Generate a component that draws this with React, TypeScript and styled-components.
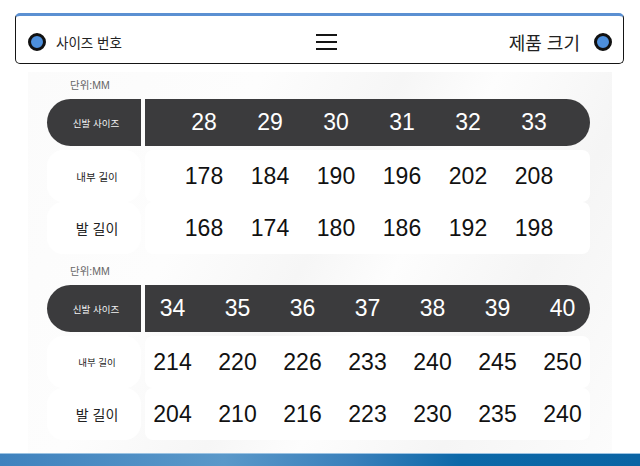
import React from 'react';
import styled, {createGlobalStyle} from 'styled-components';

type SizeTable = {
    sizes: number[]
    inner: number[]
    foot: number[]
    colWidth: number
    shift: number
    innerLabelSize: number
}

const tables: SizeTable[] = [
    {
        sizes: [28, 29, 30, 31, 32, 33],
        inner: [178, 184, 190, 196, 202, 208],
        foot: [168, 174, 180, 186, 192, 198],
        colWidth: 66,
        shift: 26,
        innerLabelSize: 10.5,
    },
    {
        sizes: [34, 35, 36, 37, 38, 39, 40],
        inner: [214, 220, 226, 233, 240, 245, 250],
        foot: [204, 210, 216, 223, 230, 235, 240],
        colWidth: 65,
        shift: -5,
        innerLabelSize: 9.5,
    },
];

const GlobalStyle = createGlobalStyle`
  html, body {
    margin: 0;
    padding: 0;
    background: #ffffff;
  }
  body {
    font-family: "Liberation Sans", "Noto Sans CJK KR", sans-serif;
  }
`

function App() {
    return (
        <Page>
            <GlobalStyle/>
            <Header>
                <Side>
                    <Dot/>
                    <LeftTitle>사이즈 번호</LeftTitle>
                </Side>
                <Burger>
                    <span/><span/><span/>
                </Burger>
                <Side>
                    <RightTitle>제품 크기</RightTitle>
                    <Dot/>
                </Side>
            </Header>
            <Panel>
                {tables.map((t, i) => (
                    <Section key={i} $first={i === 0}>
                        <Unit>단위:MM</Unit>
                        <PillRow>
                            <PillLabel>신발 사이즈</PillLabel>
                            <PillValues>
                                <ValueGrid $cols={t.sizes.length} $w={t.colWidth} $shift={t.shift}>
                                    {t.sizes.map(s => <HeadNum key={s}>{s}</HeadNum>)}
                                </ValueGrid>
                            </PillValues>
                        </PillRow>
                        <DataRow>
                            <LabelCell $size={t.innerLabelSize}>내부 길이</LabelCell>
                            <ValueCell>
                                <ValueGrid $cols={t.inner.length} $w={t.colWidth} $shift={t.shift}>
                                    {t.inner.map((v, k) => <Num key={k}>{v}</Num>)}
                                </ValueGrid>
                            </ValueCell>
                        </DataRow>
                        <DataRow>
                            <LabelCell $size={14}>발 길이</LabelCell>
                            <ValueCell>
                                <ValueGrid $cols={t.foot.length} $w={t.colWidth} $shift={t.shift}>
                                    {t.foot.map((v, k) => <Num key={k}>{v}</Num>)}
                                </ValueGrid>
                            </ValueCell>
                        </DataRow>
                    </Section>
                ))}
            </Panel>
            <Footer/>
        </Page>
    );
}

export default App;

const Page = styled.div`
  width: 640px;
  height: 466px;
  display: flex;
  flex-direction: column;
  overflow: hidden;
  background: #ffffff;
`

const Header = styled.div`
  box-sizing: border-box;
  margin: 13px 16px 0 15px;
  height: 51px;
  border: 1.5px solid #151515;
  border-top: 3px solid #5b90d2;
  border-radius: 5px;
  padding: 5px 11px 0 12px;
  display: flex;
  align-items: center;
  justify-content: space-between;
  background: #ffffff;
`

const Side = styled.div`
  display: flex;
  align-items: center;
  gap: 10px;
  width: 140px;
  &:last-child {
    justify-content: flex-end;
    gap: 14px;
  }
`

const Dot = styled.div`
  box-sizing: border-box;
  width: 18px;
  height: 18px;
  border-radius: 50%;
  border: 3px solid #111;
  background: #4d8fdc;
`

const LeftTitle = styled.span`
  font-size: 13.5px;
  color: #222;
`

const RightTitle = styled.span`
  font-size: 18px;
  color: #222;
`

const Burger = styled.div`
  display: flex;
  flex-direction: column;
  gap: 4.7px;
  width: 21px;
  margin-left: 12px;
  span {
    display: block;
    height: 2px;
    background: #151515;
  }
`

const Panel = styled.div`
  flex: 1;
  margin: 8px 28px 0;
  padding: 5px 0 0 19px;
  background: linear-gradient(118deg, #fbfbfb 0%, #fdfdfd 30%, #f6f6f6 48%, #fdfdfd 60%, #f5f5f5 78%, #fcfcfc 100%);
`

const Section = styled.div<{ $first: boolean }>`
  display: flex;
  flex-direction: column;
  margin-top: ${p => p.$first ? 0 : 9}px;
`

const Unit = styled.div`
  height: 16px;
  line-height: 16px;
  margin: 0 0 6px 23px;
  font-size: 10.5px;
  color: #666;
`

const PillRow = styled.div`
  display: flex;
  gap: 4px;
  height: 47px;
  margin-bottom: 4px;
`

const PillLabel = styled.div`
  width: 94px;
  display: flex;
  align-items: center;
  justify-content: center;
  padding-left: 4px;
  box-sizing: border-box;
  background: #3b3b3d;
  border-radius: 24px 0 0 24px;
  color: #f2f2f2;
  font-size: 9.5px;
`

const PillValues = styled.div`
  width: 445px;
  display: flex;
  align-items: center;
  background: #3b3b3d;
  border-radius: 0 24px 24px 0;
`

const ValueGrid = styled.div<{ $cols: number, $w: number, $shift: number }>`
  display: grid;
  grid-template-columns: repeat(${p => p.$cols}, ${p => p.$w}px);
  margin-left: ${p => p.$shift}px;
  justify-items: center;
  align-items: center;
`

const HeadNum = styled.span`
  font-size: 23px;
  color: #ffffff;
`

const Num = styled.span`
  font-size: 23px;
  color: #111;
`

const DataRow = styled.div`
  display: flex;
  gap: 4px;
  height: 52px;
`

const LabelCell = styled.div<{ $size: number }>`
  width: 94px;
  display: flex;
  align-items: center;
  justify-content: center;
  padding-left: 6px;
  box-sizing: border-box;
  background: #ffffff;
  border-radius: 16px;
  font-size: ${p => p.$size}px;
  color: #222;
`

const ValueCell = styled.div`
  width: 445px;
  display: flex;
  align-items: center;
  background: #ffffff;
  border-radius: 8px;
`

const Footer = styled.div`
  height: 12px;
  border-top: 1px solid #9cc3e2;
  background: linear-gradient(90deg, #3f82be 0%, #5a98c9 35%, #3a80bb 55%, #0c68a8 72%, #0a64a4 100%);
`
